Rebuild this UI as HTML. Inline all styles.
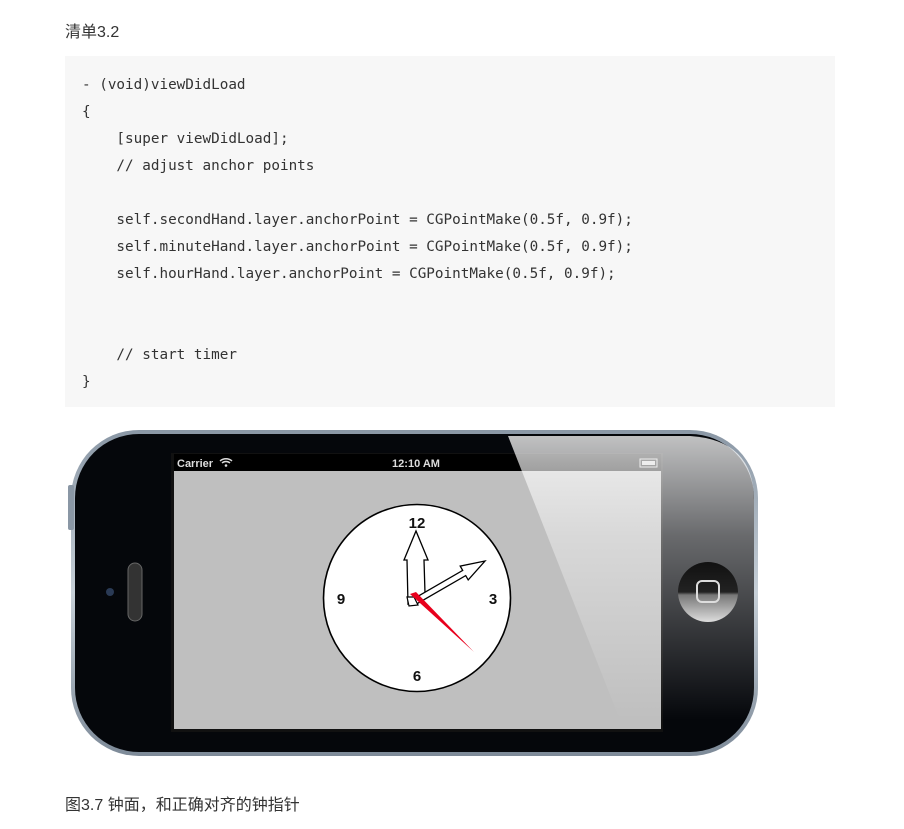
<!DOCTYPE html>
<html><head><meta charset="utf-8"><style>
*{margin:0;padding:0;box-sizing:border-box}
body{width:904px;height:829px;background:#fff;position:relative;overflow:hidden;font-family:"Liberation Sans","Noto Sans CJK SC",sans-serif;color:#333}
.t{position:absolute;left:65px;font-size:16px;color:#333}
.code{position:absolute;left:65px;top:56px;width:770px;height:351px;background:#f7f7f7}
.code pre{position:absolute;left:17px;top:16px;font-family:"DejaVu Sans Mono","Liberation Mono",monospace;font-size:14.3px;line-height:27px;color:#333}
</style></head><body>
<div class="t" style="top:18px">清单3.2</div>
<div class="code"><pre>- (void)viewDidLoad
{
    [super viewDidLoad];
    // adjust anchor points

    self.secondHand.layer.anchorPoint = CGPointMake(0.5f, 0.9f);
    self.minuteHand.layer.anchorPoint = CGPointMake(0.5f, 0.9f);
    self.hourHand.layer.anchorPoint = CGPointMake(0.5f, 0.9f);


    // start timer
}</pre></div>

<svg style="position:absolute;left:0;top:0" width="904" height="829">
<defs>
<linearGradient id="rim" x1="0" y1="0" x2="0" y2="1"><stop offset="0" stop-color="#8a97a5"/><stop offset=".5" stop-color="#c7d0d8"/><stop offset="1" stop-color="#7d8a98"/></linearGradient>
<linearGradient id="glare" x1="0" y1="0" x2="0" y2="1"><stop offset="0" stop-color="#fff" stop-opacity=".75"/><stop offset=".35" stop-color="#fff" stop-opacity=".4"/><stop offset="1" stop-color="#fff" stop-opacity="0"/></linearGradient>
<linearGradient id="btn" x1="0" y1="0" x2="0" y2="1"><stop offset="0" stop-color="#111"/><stop offset=".5" stop-color="#222"/><stop offset=".55" stop-color="#777"/><stop offset="1" stop-color="#ddd"/></linearGradient>
</defs>
<rect x="71" y="430" width="687" height="326" rx="68" fill="url(#rim)"/>
<rect x="75" y="434" width="679" height="318" rx="64" fill="#05070b"/>
<rect x="68" y="485" width="6" height="45" rx="2" fill="#8a97a5"/>
<rect x="171" y="453" width="492" height="279" fill="#111"/>
<rect x="174" y="454" width="487" height="17" fill="#000"/>
<rect x="174" y="471" width="487" height="258" fill="#bfbfbf"/>
<text x="177" y="467" font-family="Liberation Sans" font-size="11" font-weight="bold" fill="#ddd">Carrier</text>
<path d="M222 463 a6 6 0 0 1 8 0 M220 461 a9 9 0 0 1 12 0" stroke="#ddd" stroke-width="1.5" fill="none"/><circle cx="226" cy="465.5" r="1.3" fill="#ddd"/>
<text x="416" y="467" text-anchor="middle" font-family="Liberation Sans" font-size="11" font-weight="bold" fill="#ddd">12:10 AM</text>
<rect x="640" y="459" width="17" height="8" fill="none" stroke="#ccc"/><rect x="642" y="461" width="13" height="4" fill="#ccc"/>
<circle cx="417" cy="598" r="93.5" fill="#fff" stroke="#000" stroke-width="1.6"/>
<g font-family="Liberation Sans" font-weight="bold" font-size="15" fill="#111" text-anchor="middle">
<text x="417" y="528">12</text><text x="493" y="604">3</text><text x="417" y="681">6</text><text x="341" y="604">9</text></g>
<path d="M408 604 L407 560 L404 560 L416 531 L428 560 L424 560 L425 593 Z" fill="#fff" stroke="#000" stroke-width="1.3"/>
<path d="M412.5 599.4 L462.7 570.4 L460.2 566.1 L485 561 L468.2 579.9 L465.7 575.6 L415.5 604.6 Z" fill="#fff" stroke="#000" stroke-width="1.3"/>
<path d="M407 597 L409 606 L418 605 L414 597 Z" fill="#fff" stroke="#000" stroke-width="1.2"/>
<path d="M410 594 L416 592 L474 652 Z" fill="#e8001c"/>
<path d="M508 436 L690 436 Q754 440 754 500 L754 720 L620 720 Z" fill="url(#glare)"/>
<circle cx="110" cy="592" r="4" fill="#2a3a55"/>
<rect x="128" y="563" width="14" height="58" rx="7" fill="#333" stroke="#666"/>
<ellipse cx="708" cy="592" rx="30" ry="30" fill="url(#btn)"/>
<rect x="697" y="581" width="22" height="21" rx="5" fill="none" stroke="#ddd" stroke-width="2"/>
</svg>
<div class="t" style="top:791px;font-size:16px">图3.7 钟面，和正确对齐的钟指针</div>
</body></html>
